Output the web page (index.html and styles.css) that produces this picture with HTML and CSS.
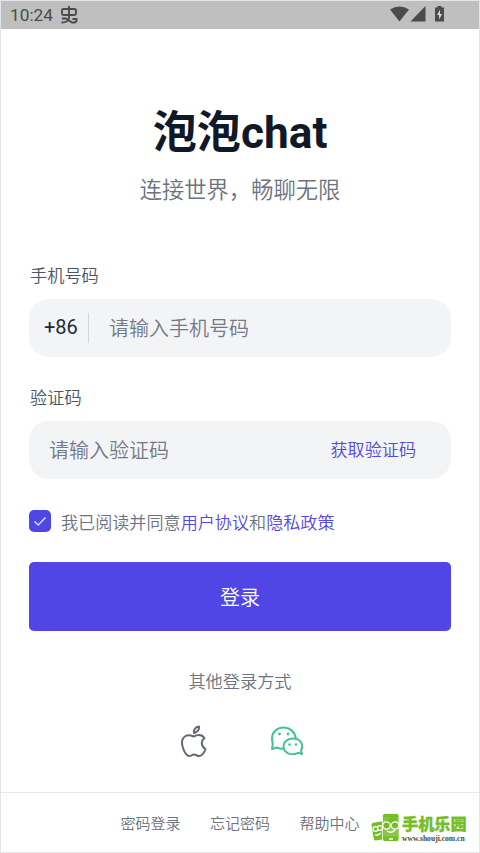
FILE: index.html
```html
<!DOCTYPE html>
<html lang="zh-CN">
<head>
<meta charset="utf-8">
<title>泡泡chat</title>
<link rel="stylesheet" href="styles.css">
</head>
<body>
<div class="screen">
  <header class="status">
    <span class="time">10:24</span>
    <svg class="bug" width="18" height="20" viewBox="0 0 18 20"><path d="M3.500 4H14.500Q16 4 16 5.500V8.500Q16 10 14.500 10H3.500Q2 10 2 8.500V5.500Q2 4 3.500 4ZM9 1V13Q8.500 17.500 1.500 17.500M2 13.500H6L12 17.500H14.500Q17 17 16.500 14H12.500"/></svg>
    <svg class="signals" width="56" height="18" viewBox="0 0 56 18"><path d="M0 3.500Q9.500-2.500 19 3.500L9.500 15.500ZM20.500 15.500 35.500 0V15.500ZM47.500 1.500V0H51.500V1.500H54V15.500H45V1.500Z"/><path class="bolt" d="M50 3.500 47 9H49V13.500L52.200 8H50Z"/></svg>
  </header>
  <main class="content">
    <h1>泡泡chat</h1>
    <p class="subtitle">连接世界，畅聊无限</p>
    <div class="label">手机号码</div>
    <div class="field phone"><span class="prefix">+86</span><span class="placeholder">请输入手机号码</span></div>
    <div class="label">验证码</div>
    <div class="field code"><span class="placeholder">请输入验证码</span><a class="send">获取验证码</a></div>
    <div class="agreement">
      <span class="checkbox"><svg width="22" height="22" viewBox="0 0 22 22"><path d="M5.500 11.500 9.300 15 16.500 7.500"/></svg></span>
      <span>我已阅读并同意<a>用户协议</a>和<a>隐私政策</a></span>
    </div>
    <button class="login">登录</button>
    <div class="other">其他登录方式</div>
    <div class="providers">
      <svg class="apple" width="28" height="34" viewBox="0 0 28 34"><path d="M13.500 11.500C10.500 10 8 9.500 5.500 11C1.500 13.500 1.300 18 3 23C4.500 27.500 7 31 9.500 31C11.500 31 12 29.500 14 29.500C16 29.500 17 31 19 31C21.500 31 24 28 25.500 24C21 21.500 20.500 16 24.500 13C22 9.500 17.500 9.500 13.500 11.500ZM14 8C13.500 4.500 15.500 1.800 19 1.500C19.500 4.500 17.500 7.500 14 8Z"/></svg>
      <svg class="wechat" width="34" height="34" viewBox="0 0 34 34"><path d="M25.800 13.500C25 6.500 19.500 2.500 13.500 2.500C6.500 2.500 2 7.500 2 13.500C2 16 2.500 17.800 2.800 19L2 24L7 22.500C9 23.600 11 24 13.500 23.800M31 25.300L32 29L28 27.800C21 31.500 13.500 27.500 13.500 21.500C13.500 17 17.500 13.500 22.700 13.500C31 13.500 34 20 31 25.300Z"/><g><circle cx="9.500" cy="9" r="1.400"/><circle cx="18" cy="9" r="1.400"/><circle cx="19.500" cy="19.500" r="1.300"/><circle cx="26" cy="19.500" r="1.300"/></g></svg>
    </div>
  </main>
  <footer class="footer">
    <a>密码登录</a><a>忘记密码</a><a>帮助中心</a>
    <div class="watermark">
      <svg width="30" height="30" viewBox="0 0 30 30"><g class="green"><rect x="1.500" y="9" width="12" height="18" rx="2" transform="rotate(-9 7 18)"/><rect class="front" x="11.500" y=".500" width="16.500" height="28" rx="2.500"/></g><g class="glasses"><path class="screen-area" d="M12.500 4.500H27V23.500H12.500Z"/><path class="hair" d="M14 10Q15 4 26 5L25 10Z"/><circle cx="4.500" cy="16" r="2.400"/><circle cx="9" cy="15" r="2.400"/><circle cx="15.500" cy="12.500" r="3.700"/><circle cx="24" cy="12.500" r="3.700"/><path d="M4 22Q7 23 10 20M18 26H22"/><path class="smile" d="M16 18Q20 21 24 17"/></g></svg>
      <div class="brand"><b>手机乐园</b><small>www.shouji.com.cn</small></div>
    </div>
  </footer>
</div>
</body>
</html>
```
FILE: styles.css
```css
* { box-sizing: border-box; }
body { margin: 0; background: #fff; font-family: Roboto, "Noto Sans CJK SC", sans-serif; font-weight: 350; color: #6b7280; }
svg { display: block; fill: none; flex: none; }
.screen { width: 480px; height: 853px; border: 1px solid #e5e5e5; display: flex; flex-direction: column; overflow: hidden; }
.status { height: 28px; flex: none; background: #bfbfbf; display: flex; align-items: center; padding: 0 33px 0 9px; color: #4b4b4b; font-size: 17.300px; font-weight: 400; }
.bug { margin-left: 7px; stroke: #4b4b4b; stroke-width: 1.900; }
.signals { margin-left: auto; margin-top: -1px; fill: #4b4b4b; }
.signals .bolt { fill: #d4d4d4; }
.content { height: 763px; flex: none; padding: 70px 28px 0; }
h1 { margin: 0; height: 68px; line-height: 68px; text-align: center; font-size: 44.200px; font-weight: 700; color: #111827; }
.subtitle { margin: 7px 0 0; height: 32px; line-height: 32px; text-align: center; font-size: 22.300px; }
.label { height: 26px; line-height: 26px; padding-left: 1px; font-size: 17.200px; color: #4b5563; margin-top: 57px; }
.field { height: 58px; margin-top: 10px; border-radius: 20px; background: #f3f4f6; display: flex; align-items: center; font-size: 20px; }
.field + .label { margin-top: 28px; }
.placeholder { color: #737985; line-height: 28px; margin-top: 1px; }
.phone { padding-left: 15px; }
.prefix { width: 45px; height: 30px; line-height: 29px; border-right: 1px solid #d1d5db; margin-right: 20px; color: #1f2937; font-weight: 400; }
.code { padding: 0 35px 0 20px; justify-content: space-between; }
.send { font-size: 17.100px; margin-top: -3px; }
.send, .agreement a { color: #5549d8; }
.agreement { height: 26px; margin-top: 30px; display: flex; align-items: center; gap: 10px; font-size: 17.100px; }
.agreement > span:last-child { margin-top: -1px; }
.checkbox { width: 22px; height: 22px; border-radius: 5px; background: #4f46e5; margin-top: -3px; }
.checkbox path { stroke: #d9d8ff; stroke-width: 1.500; }
.login { display: block; width: 100%; height: 69px; margin-top: 27px; border: 0; border-radius: 5px; padding: 0; background: #4f46e5; color: #fff; font: 350 20px Roboto, "Noto Sans CJK SC", sans-serif; }
.other { margin-top: 38px; height: 26px; line-height: 26px; text-align: center; font-size: 17.200px; }
.providers { display: flex; justify-content: center; gap: 62px; margin-top: 30px; padding-left: 3px; }
.apple { stroke: #626976; stroke-width: 2; stroke-linejoin: round; }
.wechat { stroke: #45c192; stroke-width: 2; stroke-linejoin: round; }
.wechat g { fill: #45c192; stroke: none; }
.footer { flex: 1; border-top: 1px solid #e5e7eb; display: flex; align-items: center; justify-content: center; gap: 29.500px; font-size: 15px; position: relative; }
.watermark { position: absolute; left: 370px; top: 20px; display: flex; gap: 1px; }
.green { fill: #75bd28; }
.front { stroke: #fff; stroke-width: .8; }
.glasses { stroke: #fff; stroke-width: 1.300; }
.glasses circle { fill: #75bd28; }
.screen-area { fill: #8bc84a; stroke: none; }
.hair { fill: #75bd28; stroke: none; }
.smile { stroke: #fff; }
.brand { display: flex; flex-direction: column; white-space: nowrap; }
.brand b { font-size: 16.200px; line-height: 20px; font-weight: 900; color: #75bd28; -webkit-text-stroke: .3px #75bd28; margin-top: 2px; }
.brand small { font: bold 7.600px/7px "Liberation Serif", serif; color: #3f4b35; }
```
